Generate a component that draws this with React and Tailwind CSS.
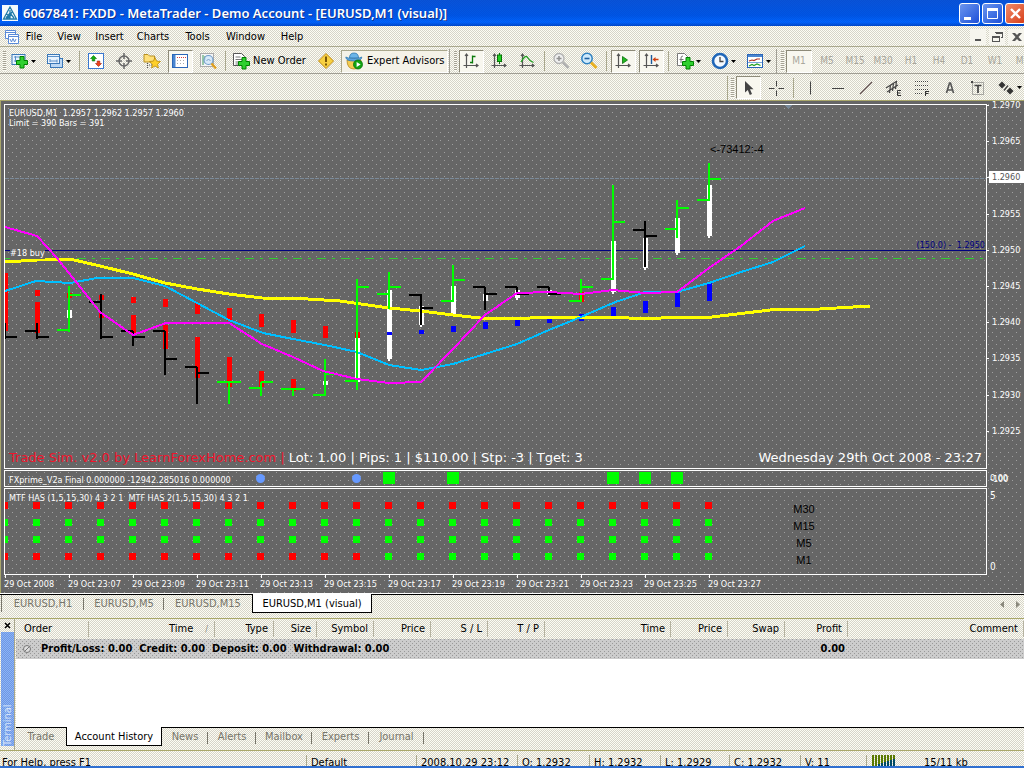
import React from "react";

const UI = "font-['DejaVu_Sans_Condensed','DejaVu_Sans',sans-serif]";
const FACE =
  "bg-[#ece9d8] bg-[repeating-conic-gradient(#fdfdf4_0_25%,#d6d4c9_0_50%)] bg-[length:2px_2px]";

/* ---------- icons ---------- */

function Icon({ children, size = 18 }) {
  return (
    <svg width={size} height={size} viewBox="0 0 18 18" fill="none" className="shrink-0" aria-hidden="true">
      {children}
    </svg>
  );
}

const Plus = ({ x = 6, y = 6 }) => (
  <path
    d={`M${x + 4} ${y + 0.5}h4v4h3.5v4h-3.5v3.5h-4v-3.5h-3.5v-4h3.5z`}
    fill="#2fd02f"
    stroke="#008000"
  />
);

const Axes = () => (
  <path d="M4.5 2v14M1.5 13.5h14M3 4l1.5-2L6 4M14 12l2 1.500l-2 1.500" stroke="#555" strokeWidth="1.2" />
);

const NewChartIcon = () => (
  <Icon>
    <rect x="1" y="2.500" width="13" height="10" fill="#e8f3ff" stroke="#3a78b8" />
    <path d="M3 5h9M4.500 4v6M3 9h5" stroke="#5a90c8" />
    <Plus x={5} y={4} />
  </Icon>
);
const ProfilesIcon = () => (
  <Icon>
    <rect x="4.500" y="6.500" width="12" height="9" fill="#bcd8f4" stroke="#3a78b8" />
    <rect x="1.500" y="2.500" width="12" height="9" fill="#e8f3ff" stroke="#3a78b8" />
    <path d="M2 4.500h11M4 7v3M4 9h7M11 7.500v3" stroke="#5a90c8" />
  </Icon>
);
const MarketWatchIcon = () => (
  <Icon>
    <rect x="1.500" y="1.500" width="15" height="15" fill="#fff" stroke="#3a78d0" />
    <path d="M6.500 3.500l3 3h-1.700v2.500h-2.600v-2.500h-1.700z" fill="#10b010" stroke="#087008" strokeWidth=".6" />
    <path d="M11.500 14.500l3-3h-1.700v-2.500h-2.600v2.500h-1.700z" fill="#f04018" stroke="#a02008" strokeWidth=".6" />
  </Icon>
);
const DataWindowIcon = () => (
  <Icon>
    <circle cx="9" cy="9" r="5" stroke="#666" strokeWidth="1.500" />
    <path d="M9 1v6M9 11v6M1 9h6M11 9h6" stroke="#666" strokeWidth="1.500" />
  </Icon>
);
const NavigatorIcon = () => (
  <Icon>
    <path d="M1 2.500h4l1.500 1.500h5v6h-10.500z" fill="#ffe078" stroke="#b89020" />
    <path d="M4.500 11v5M6 13h4" stroke="#555" strokeDasharray="1 1" />
    <path d="M12 5.500l1.600 3.600 3.900.4-2.900 2.700.8 3.800-3.400-2-3.400 2 .8-3.800-2.900-2.700 3.900-.4z" fill="#ffd02a" stroke="#b88a10" strokeWidth=".8" />
  </Icon>
);
const TerminalIcon = () => (
  <Icon>
    <rect x="1.500" y="2.500" width="15" height="13" fill="#fff" stroke="#2a66b8" />
    <rect x="2" y="3" width="2.500" height="12" fill="#4a86d0" />
    <path d="M6 5.500h9" stroke="#d04040" strokeDasharray="1 1" />
    <path d="M6 8.500h9M6 11.500h9" stroke="#aaa" strokeDasharray="1 2" />
  </Icon>
);
const TesterIcon = () => (
  <Icon>
    <rect x="1.500" y="1.500" width="13" height="13" fill="#f5f5f5" stroke="#aaa" />
    <path d="M4 3v10M6 4v4" stroke="#3a9a5a" />
    <circle cx="9.500" cy="8" r="4.500" fill="#cfe6fa" fillOpacity=".8" stroke="#6f9cc8" strokeWidth="1.200" />
    <path d="M7.500 9l2-2 2 2" stroke="#7aa2c8" />
    <path d="M12.500 11.500l4.500 5" stroke="#e0a020" strokeWidth="2.400" />
  </Icon>
);
const OrderIcon = () => (
  <Icon>
    <path d="M1.500 1.500h8l3 3v9h-11z" fill="#fff" stroke="#555" />
    <path d="M3.500 5h5M3.500 7.500h7M3.500 10h4M3.500 12h3" stroke="#777" />
    <Plus x={6} y={5} />
  </Icon>
);
const WarnIcon = () => (
  <Icon>
    <path d="M9 1.500l7.500 7.500-7.500 7.500-7.500-7.500z" fill="#f8d040" stroke="#c08a10" strokeLinejoin="round" />
    <path d="M9 4.500v5.500M9 11.500v2" stroke="#6a4a00" strokeWidth="1.800" />
  </Icon>
);
const ExpertIcon = () => (
  <Icon>
    <path d="M2 8q0 9 7 9t7-9z" fill="#f4cc50" stroke="#b88a20" strokeWidth=".8" />
    <path d="M4.500 6q0-5 4.500-5t4.500 5z" fill="#6ab4e8" stroke="#2e78b0" strokeWidth=".8" />
    <path d="M.8 5q2 1.500 8 1.500t8-1.500q0 4-8 4t-8-4z" fill="#5aa4e0" stroke="#2e78b0" strokeWidth=".8" />
    <circle cx="13" cy="12.500" r="4.500" fill="#12a612" stroke="#077007" strokeWidth=".8" />
    <path d="M11.600 10l4 2.500-4 2.500z" fill="#fff" />
  </Icon>
);
const BarChartIcon = () => (
  <Icon>
    <Axes />
    <path d="M10.500 3.500v8M8 10.500h2.500M10.500 4.500h3" stroke="#0a7a0a" strokeWidth="1.300" />
  </Icon>
);
const CandleIcon = () => (
  <Icon>
    <Axes />
    <path d="M9.500 1v11" stroke="#0a7a0a" />
    <rect x="7.500" y="3" width="4" height="6.500" fill="#20d020" stroke="#087008" />
  </Icon>
);
const LineChartIcon = () => (
  <Icon>
    <Axes />
    <path d="M3 10q4.500-8 6.500-4.500t6 5" stroke="#20a020" strokeWidth="1.300" />
  </Icon>
);
const ZoomInIcon = () => (
  <Icon>
    <circle cx="7" cy="6.500" r="5" fill="#efefef" stroke="#b0b0b0" strokeWidth="1.300" />
    <path d="M4.500 6.500h5M7 4v5" stroke="#909090" strokeWidth="1.500" />
    <path d="M11 10.500l5.500 5.500" stroke="#b0b0b0" strokeWidth="2.600" />
  </Icon>
);
const ZoomOutIcon = () => (
  <Icon>
    <circle cx="7" cy="6.500" r="5.200" fill="#cfeafc" stroke="#2e80c0" strokeWidth="1.500" />
    <path d="M4.500 6.500h5" stroke="#1e60a0" strokeWidth="1.600" />
    <path d="M11 10.500l5.500 5.500" stroke="#e8b020" strokeWidth="2.800" />
  </Icon>
);
const AutoScrollIcon = () => (
  <Icon>
    <Axes />
    <path d="M8.500 4.500l5 3.500-5 3.500z" fill="#20b820" stroke="#087008" strokeWidth=".8" />
  </Icon>
);
const ShiftIcon = () => (
  <Icon>
    <Axes />
    <path d="M9.500 3v9" stroke="#1a5a9a" strokeWidth="1.400" />
    <path d="M10.500 7.500l3-2.500v1.800h3v1.400h-3V10z" fill="#d04010" />
  </Icon>
);
const IndicatorIcon = () => (
  <Icon>
    <path d="M1.500 1.500h7l3 3v9h-10z" fill="#fff" stroke="#777" />
    <path d="M7 4q-2 0-2 2v5M3.500 7.500h4" stroke="#777" />
    <Plus x={6} y={5} />
  </Icon>
);
const ClockIcon = () => (
  <Icon>
    <circle cx="9" cy="9" r="7" fill="#f4f9ff" stroke="#1f66b8" strokeWidth="2.600" />
    <path d="M9 5v4.500h3.500" stroke="#444" strokeWidth="1.300" />
  </Icon>
);
const TemplateIcon = () => (
  <Icon>
    <rect x="1.500" y="2.500" width="15" height="13" fill="#fff" stroke="#2a66b8" />
    <rect x="2" y="3" width="14" height="2" fill="#4a86d0" />
    <path d="M3 9l3-1 2 .5 3-1.500 3 0" stroke="#b03020" strokeWidth="1.200" />
    <path d="M2 10.500h14" stroke="#7aa8d8" />
    <path d="M3 14l3-1.500 2 1 3-1.500 3.500 1.500" stroke="#20a020" strokeWidth="1.200" />
  </Icon>
);
const PointerIcon = () => (
  <Icon>
    <path d="M6 2v11.500l2.800-2.600 2 5 2.200-1-2-4.700h3.500z" fill="#444" />
  </Icon>
);
const CrossIcon = () => (
  <Icon>
    <path d="M9.500 2v5.500M9.500 11.500v5.500M2 9.500h5.500M11.500 9.500h5.500" stroke="#444" />
  </Icon>
);
const VLineIcon = () => <Icon><path d="M9.500 2.500v13" stroke="#444" /></Icon>;
const HLineIcon = () => <Icon><path d="M3 9.500h12" stroke="#444" /></Icon>;
const TrendIcon = () => <Icon><path d="M3 15L15 3" stroke="#655" strokeWidth="1.200" /></Icon>;
const ChannelIcon = () => (
  <Icon>
    <path d="M1 9L12 2M2 13L13 6M4.500 14l1-8M7.500 12l1-8M10.500 10l1-8" stroke="#444" strokeWidth="1.200" />
    <path d="M12.500 11.500v5M12.500 11.500h3.500M12.500 14h3M12.500 16.500h3.500" stroke="#333" />
  </Icon>
);
const FiboIcon = () => (
  <Icon>
    <path d="M2 2.500h13M2 6.500h13M2 10.500h13M2 14.500h7" stroke="#444" strokeDasharray="1 1" />
    <path d="M12.500 12v5M12.500 12.500h3.500M12.500 14.500h3" stroke="#333" />
  </Icon>
);
const TextIcon = () => (
  <Icon><path d="M5.500 14L8.500 4h1l3 10M6.500 11h5" stroke="#555" strokeWidth="1.600" /></Icon>
);
const LabelIcon = () => (
  <Icon>
    <rect x="3.500" y="3.500" width="11" height="12" stroke="#666" strokeDasharray="1 1" />
    <path d="M5.500 6.500h7M9 6.500v7.500" stroke="#444" strokeWidth="1.700" />
    <path d="M2 2h2v2H2z" fill="#444" />
  </Icon>
);
const ArrowsIcon = () => (
  <Icon>
    <path d="M5 2.500l3.500 3.500-3.500 3.500-3.500-3.500z" fill="#333" />
    <path d="M7 11.500l4-5" stroke="#444" strokeWidth="1.300" />
    <path d="M13 8.500l3.500 3.500-3.500 3.500-3.500-3.500z" fill="#333" />
  </Icon>
);
const Caret = () => (
  <svg width="5" height="3" viewBox="0 0 5 3" className="shrink-0" aria-hidden="true">
    <path d="M0 0h5L2.500 3z" fill="#000" />
  </svg>
);

/* ---------- bars ---------- */

function Tool({ label, pressed, drop, children }) {
  return (
    <button
      type="button"
      aria-label={label}
      aria-pressed={pressed ? true : undefined}
      className={
        (drop ? "w-[35px] gap-[2px] " : "w-7 ") +
        "flex h-6 shrink-0 items-center justify-center"
      }
    >
      {pressed ? (
        <span className="flex h-[23px] w-[25px] items-center justify-center border border-[#8d8a78] border-r-white border-b-white bg-[#f8f7ef]">
          {children}
        </span>
      ) : (
        children
      )}
      {drop && <Caret />}
    </button>
  );
}

const Sep = () => <span className="mr-[2px] ml-[3px] h-5 w-px shrink-0 bg-[#a9a78d]" />;
const Grip = () => (
  <span className="h-5 w-[3px] shrink-0 bg-[repeating-linear-gradient(#a5a294_0_1px,#fbfaf2_1px_2px)]" />
);

function TitleBar() {
  return (
    <header className="flex h-[26px] shrink-0 items-center bg-[repeating-conic-gradient(#0030c030_0_25%,transparent_0_50%),linear-gradient(#0a55d8,#0058e6_60%,#0066ff_85%,#0048c8)] bg-[length:2px_2px,100%_100%] pl-[2px]">
      <svg width="16" height="16" viewBox="0 0 16 16" aria-hidden="true">
        <rect width="16" height="16" fill="#f4fafc" />
        <path d="M8 2L1.500 14h13zM8 5v9M5 9l3 5M4 13l4-5 4 5M10 7l-5 7" stroke="#1f7aa8" fill="none" strokeWidth="1.300" />
      </svg>
      <h1 className="ml-[5px] flex-1 truncate font-['Noto_Sans','Open_Sans',sans-serif] text-[13px] leading-4 font-semibold text-white [text-shadow:1px_1px_0_#10308a]">
        6067841: FXDD - MetaTrader - Demo Account - [EURUSD,M1 (visual)]
      </h1>
      <div className="-mr-[2px] flex shrink-0 gap-[2px]">
        <button type="button" aria-label="Minimize" className="h-[21px] w-[21px] rounded-[3px] border border-white bg-linear-to-br from-[#6c95ee] to-[#1d4ed8]">
          <svg width="19" height="19" viewBox="0 0 19 19"><path d="M4 13h7v3H4z" fill="#fff" /></svg>
        </button>
        <button type="button" aria-label="Restore" className="h-[21px] w-[21px] rounded-[3px] border border-white bg-linear-to-br from-[#6c95ee] to-[#1d4ed8]">
          <svg width="19" height="19" viewBox="0 0 19 19"><path d="M4.500 5.500h10v9h-10z" stroke="#fff" fill="none" /><path d="M4 4h11v3H4z" fill="#fff" /></svg>
        </button>
        <button type="button" aria-label="Close" className="h-[21px] w-[21px] rounded-[3px] border border-white bg-linear-to-br from-[#f08a68] to-[#d63a10]">
          <svg width="19" height="19" viewBox="0 0 19 19"><path d="M5 5l9 9M14 5l-9 9" stroke="#fff" strokeWidth="2.400" /></svg>
        </button>
      </div>
    </header>
  );
}

function MenuBar() {
  const items = [
    ["File", "w-[28px]"],
    ["View", "w-[42px]"],
    ["Insert", "w-[39px]"],
    ["Charts", "w-[48px]"],
    ["Tools", "w-[41px]"],
    ["Window", "w-[55px]"],
    ["Help", "w-[38px]"],
  ];
  return (
    <nav className={FACE + " flex h-[21px] shrink-0 items-center border-b border-[#a9a78d] pt-px pl-1"}>
      <svg width="16" height="16" viewBox="0 0 16 16" aria-hidden="true">
        <path d="M1.500 1.500h10v8h-10z" fill="#fff" stroke="#5a8ad8" />
        <path d="M1 3.500h11" stroke="#5a8ad8" />
        <path d="M4.500 5.500h10v9h-10z" fill="#fff" stroke="#5a8ad8" />
        <path d="M4 7.500h11M6 10l1.500 3L9 9.500l1.500 3.500L12 10" stroke="#5a8ad8" fill="none" />
      </svg>
      <div className="flex flex-1 items-center">
        {items.map(([t, w]) => (
          <button key={t} type="button" className={"text-center text-[11px] leading-4 whitespace-nowrap " + w}>
            {t}
          </button>
        ))}
      </div>
      <div className="flex gap-[3px]">
        {[
          ["Minimize chart", "M4 9h6v2H4z"],
          ["Restore chart", "M5 2h8v6h-2V7h1V4H6V3H5zM2 6h8v6H2zM3 8v3h6V8z"],
          ["Close chart", "M3 3h3l2 2 2-2h3l-3.500 4 3.500 4h-3l-2-2-2 2h-3l3.500-4z"],
        ].map(([l, d]) => (
          <button key={l} type="button" aria-label={l} className="flex h-4 w-4 items-center justify-center bg-[#f6f5ee]">
            <svg width="14" height="14" viewBox="0 0 14 14"><path d={d} fill="#555" fillRule="evenodd" /></svg>
          </button>
        ))}
      </div>
    </nav>
  );
}

function MainToolbar() {
  return (
    <div className={FACE + " flex h-[27px] shrink-0 items-center overflow-hidden border-b border-[#a09e94] pt-[2px] pl-[3px] text-[11px] leading-4"}>
      <Grip />
      <Tool label="New chart" drop><NewChartIcon /></Tool>
      <Tool label="Profiles" drop><ProfilesIcon /></Tool>
      <Sep />
      <Tool label="Market watch"><MarketWatchIcon /></Tool>
      <Tool label="Data window"><DataWindowIcon /></Tool>
      <Tool label="Navigator"><NavigatorIcon /></Tool>
      <Tool label="Terminal" pressed><TerminalIcon /></Tool>
      <Tool label="Strategy tester"><TesterIcon /></Tool>
      <Sep />
      <button type="button" className="ml-1 flex h-6 w-[80px] shrink-0 items-center gap-[3px] whitespace-nowrap">
        <OrderIcon />New Order
      </button>
      <Tool label="Options"><WarnIcon /></Tool>
      <button type="button" aria-pressed="true" className="mx-px flex h-[23px] w-[107px] shrink-0 items-center gap-1 border border-[#a9a78d] border-r-white border-b-white bg-[#f4f2e8] pl-[3px] whitespace-nowrap">
        <ExpertIcon />Expert Advisors
      </button>
      <span className="mr-1 h-6 w-px shrink-0 bg-[#a09e94]" />
      <Grip />
      <Tool label="Bar chart" pressed><BarChartIcon /></Tool>
      <Tool label="Candlesticks"><CandleIcon /></Tool>
      <Tool label="Line chart"><LineChartIcon /></Tool>
      <Sep />
      <Tool label="Zoom in"><ZoomInIcon /></Tool>
      <Tool label="Zoom out"><ZoomOutIcon /></Tool>
      <Sep />
      <Tool label="Auto scroll" pressed><AutoScrollIcon /></Tool>
      <Tool label="Chart shift" pressed><ShiftIcon /></Tool>
      <Sep />
      <Tool label="Indicators" drop><IndicatorIcon /></Tool>
      <Tool label="Periods" drop><ClockIcon /></Tool>
      <Tool label="Templates" drop><TemplateIcon /></Tool>
      <span className="mr-1 h-6 w-px shrink-0 bg-[#a09e94]" />
      <Grip />
      {["M1", "M5", "M15", "M30", "H1", "H4", "D1", "W1", "MN"].map((p, i) => (
        <button
          key={p}
          type="button"
          className={
            "ml-[2px] h-[23px] w-[26px] shrink-0 text-center text-[10px] leading-4 text-[#a9a79c] " +
            (i === 0 ? "border border-[#8d8a78] border-r-white border-b-white bg-[#f8f7ef]" : "")
          }
        >
          {p}
        </button>
      ))}
    </div>
  );
}

function DrawToolbar() {
  return (
    <div className={FACE + " flex h-[26px] shrink-0 items-center justify-end overflow-hidden pt-px"}>
      <span className="mr-[3px] h-6 w-px shrink-0 bg-[#a9a78d]" />
      <Grip />
      <Tool label="Cursor" pressed><PointerIcon /></Tool>
      <Tool label="Crosshair"><CrossIcon /></Tool>
      <Sep />
      <Tool label="Vertical line"><VLineIcon /></Tool>
      <Tool label="Horizontal line"><HLineIcon /></Tool>
      <Tool label="Trendline"><TrendIcon /></Tool>
      <Tool label="Channel"><ChannelIcon /></Tool>
      <Tool label="Fibonacci"><FiboIcon /></Tool>
      <Tool label="Text"><TextIcon /></Tool>
      <Tool label="Text label"><LabelIcon /></Tool>
      <div className="-mr-[3px]">
        <Tool label="Arrows" drop><ArrowsIcon /></Tool>
      </div>
    </div>
  );
}

/* ---------- chart ---------- */

const G = "#00ff00";
const K = "#000000";
// x, colour, top, bottom, open tick, close tick, bodies: [colour, top, bottom]
const BARS = [
  [5, K, 323, 338, null, 337, [["red", 273, 331]]],
  [37, K, 323, 338, 331, 337, [["red", 290, 296], ["red", 302, 333]]],
  [69, G, 286, 331, 330, 295, [["red", 293, 298], ["#fff", 310, 318]]],
  [101, K, 294, 338, 302, 337, [["red", 295, 300], ["red", 313, 318]]],
  [133, K, 331, 345, 331, 337, [["red", 297, 303], ["red", 315, 335]]],
  [165, K, 331, 374, 331, 359, [["red", 299, 307], ["red", 325, 349]]],
  [197, K, 367, 403, 367, 373, [["red", 303, 314], ["red", 337, 378]]],
  [229, G, 382, 403, 382, 382, [["red", 308, 321], ["red", 357, 387]]],
  [261, G, 382, 395, 388, 382, [["red", 314, 327], ["red", 371, 387]]],
  [293, G, 388, 395, 389, 389, [["red", 320, 333], ["red", 379, 391]]],
  [325, G, 359, 395, 395, 374, [["red", 326, 338], ["#fff", 381, 385]]],
  [357, G, 279, 389, 381, 287, [["red", 332, 338], ["#fff", 338, 382]]],
  [389, G, 272, 308, 294, 287, [["#fff", 290, 359], ["blue", 332, 335]]],
  [421, K, 294, 324, 295, 308, [["#fff", 306, 325], ["blue", 330, 334]]],
  [453, G, 265, 301, 301, 280, [["#fff", 286, 314], ["blue", 326, 332]]],
  [485, K, 287, 309, 287, 294, [["#fff", 294, 301], ["blue", 322, 329]]],
  [517, K, 287, 294, 287, 294, [["#fff", 290, 298], ["blue", 319, 326]]],
  [549, K, 287, 294, 287, 294, [["#fff", 290, 294], ["blue", 317, 323]]],
  [581, G, 279, 301, 301, 287, [["red", 292, 302], ["blue", 314, 321]]],
  [613, G, 185, 279, 279, 222, [["#fff", 241, 292], ["blue", 307, 318]]],
  [645, K, 221, 266, 230, 236, [["#fff", 238, 268], ["blue", 301, 313]]],
  [677, G, 200, 237, 229, 208, [["#fff", 218, 253], ["blue", 293, 307]]],
  [709, G, 163, 200, 200, 179, [["#fff", 185, 236], ["blue", 283, 301]]],
];

const YELLOW =
  "5,262 37,260 70,259 100,266 133,274 165,283 197,289 229,294 262,298 308,299 340,301 389,308 421,311 453,315 480,318 530,318 550,317 613,317 645,319 677,317 712,317 770,310 820,309 870,306";
const CYAN =
  "5,291 36,281 70,283 97,278 133,278 165,286 197,303 229,320 263,333 293,339 325,345 357,352 389,365 421,370 453,364 485,354 517,344 549,330 581,317 613,303 645,292 677,292 709,283 741,272 773,262 805,246";
const MAGENTA =
  "5,227 37,236 57,258 100,312 133,335 166,323 229,323 262,344 293,357 323,371 357,379 389,383 421,382 453,349 485,315 517,293 549,292 581,294 613,290 645,293 677,292 709,268 741,246 773,221 805,208";

function PricePanel() {
  return (
    <div className="relative h-[365px] overflow-hidden border border-white">
      <svg className="block h-full w-full" role="img" aria-label="EURUSD M1 price chart">
        <g transform="translate(-5 -105)" shapeRendering="crispEdges">
          <path d="M785 105h7l-3.500 4z" fill="#778899" />
          <path d="M5 178.500h3000" stroke="#7b8a99" strokeDasharray="4 1" />
          <path d="M5 250.500h3000" stroke="#000080" />
          <path d="M5 258.500h3000" stroke="#32cd32" strokeDasharray="9 6 3 6" />
          {BARS.map(([x, , , , , , bodies]) =>
            bodies.map(([c, a, b]) => (
              <g key={x + c + a} fill={c}>
                <rect x={x - 2} y={a} width="5" height={b - a} />
                {c === "#fff" && <rect x={x - 1} y={a} width="2" height={b - a + 2} />}
              </g>
            ))
          )}
          <g fill="none">
            <polyline points={YELLOW} stroke="#ffff00" strokeWidth="3" />
            <polyline points={CYAN} stroke="#00bfff" strokeWidth="2" />
          </g>
          {BARS.map(([x, c, a, b, o, cl]) => (
            <g key={x} fill={c}>
              <rect x={x - 1} y={a} width="2" height={b - a + 1} />
              {o && <rect x={x - 12} y={o - 1} width="12" height="2" />}
              <rect x={x} y={cl - 1} width="12" height="2" />
            </g>
          ))}
          <polyline points={MAGENTA} stroke="#ff00ff" strokeWidth="2" fill="none" />
        </g>
      </svg>
      <p className="absolute top-[3px] left-1 text-[9px] leading-[10px] whitespace-pre text-white">
        {"EURUSD,M1  1.2957 1.2962 1.2957 1.2960\nLimit = 390 Bars = 391"}
      </p>
      <span className="absolute top-[142px] left-[5px] bg-[#666] text-[9px] leading-3 text-white">#18 buy</span>
      <span className="absolute top-[38px] left-[705px] font-['Liberation_Sans',sans-serif] text-[11px] leading-3 text-black">&lt;-73412:-4</span>
      <span className="absolute top-[134px] right-[1px] text-[9px] leading-3 whitespace-pre text-[#000080]">{"(150.0) -  1.2950"}</span>
      <div className="absolute inset-x-1 bottom-[2px] flex justify-between font-['DejaVu_Sans',sans-serif] text-[13px] leading-4 whitespace-nowrap">
        <p className="text-white">
          <span className="text-[#f0142c]">Trade Sim. v2.0 by LearnForexHome.com |</span>{" "}
          Lot: 1.00 | Pips: 1 | $110.00 | Stp: -3 | Tget: 3
        </p>
        <p className="text-white">Wednesday 29th Oct 2008 - 23:27</p>
      </div>
    </div>
  );
}

function PriceScale() {
  const prices = ["1.2970", "1.2965", "1.2960", "1.2955", "1.2950", "1.2945", "1.2940", "1.2935", "1.2930", "1.2925"];
  return (
    <ul className="-mt-[5px] flex h-[362px] flex-col text-[9px] leading-3 text-white">
      {prices.map((p) => (
        <li key={p} className="flex flex-1 items-start">
          <span className="mt-[6px] h-px w-[2px] shrink-0 bg-white" />
          <span className={"flex-1 pl-[3px] " + (p === "1.2960" ? "bg-white text-[#555]" : "")}>{p}</span>
        </li>
      ))}
    </ul>
  );
}

const SIGNALS = [389, 453, 613, 645, 677];

function PrimePanel() {
  return (
    <div className="relative h-[17px] overflow-hidden border border-white">
      <svg className="block h-full w-full" role="img" aria-label="FXprime signals">
        <g transform="translate(-5 -471)">
          <circle cx="260.500" cy="478.500" r="4.500" fill="#6699ff" />
          <circle cx="356.500" cy="478.500" r="4.500" fill="#6699ff" />
          {SIGNALS.map((x) => (
            <rect key={x} x={x - 6} y="472" width="12" height="12" fill={G} />
          ))}
        </g>
      </svg>
      <span className="absolute top-[3px] left-1 text-[9px] leading-3 whitespace-nowrap text-white">
        FXprime_V2a Final 0.000000 -12942.285016 0.000000
      </span>
    </div>
  );
}

function HasPanel() {
  const row = (y, color) =>
    BARS.map(([x]) => <rect key={y + "-" + x} x={x - 4} y={y} width="7" height="7" fill={color(x)} />);
  return (
    <div className="relative h-[87px] overflow-hidden border border-white">
      <svg className="block h-full w-full" role="img" aria-label="MTF HAS indicator">
        <g transform="translate(-5 -489)">
          {row(502, () => "#f00")}
          {row(519, () => G)}
          {row(536, () => G)}
          {row(553, (x) => (x < 380 ? "#f00" : G))}
        </g>
      </svg>
      <span className="absolute top-[3px] left-1 text-[9px] leading-3 whitespace-pre text-white">
        {"MTF HAS (1,5,15,30) 4 3 2 1  MTF HAS 2(1,5,15,30) 4 3 2 1"}
      </span>
      <ul className="absolute top-[12px] left-[779px] w-10 text-center font-['Liberation_Sans',sans-serif] text-[11px] leading-[17px] text-black">
        <li>M30</li>
        <li>M15</li>
        <li>M5</li>
        <li>M1</li>
      </ul>
    </div>
  );
}

function TimeAxis() {
  const times = ["23:07", "23:09", "23:11", "23:13", "23:15", "23:17", "23:19", "23:21", "23:23", "23:25", "23:27"];
  return (
    <ol className="flex h-[18px] text-[9px] leading-3 whitespace-nowrap text-white">
      {["2008", ...times].map((t) => (
        <li key={t} className="w-16 shrink-0">
          <span className="ml-px block h-[3px] w-px bg-white" />
          29 Oct {t}
        </li>
      ))}
    </ol>
  );
}

function Chart() {
  return (
    <main className="flex shrink-0 border-t border-l border-[#a9a76a] bg-[#666] bg-[conic-gradient(from_270deg_at_1px_1px,#a0a0a0_25%,transparent_0),conic-gradient(from_270deg_at_1px_1px,#a0a0a0_25%,transparent_0)] bg-[length:8px_8px] bg-[position:3px_3px,7px_7px] pt-[3px] pl-[3px]">
      <div className="flex min-w-0 flex-1 flex-col">
        <PricePanel />
        <div className="mt-px"><PrimePanel /></div>
        <div className="mt-px"><HasPanel /></div>
        <TimeAxis />
      </div>
      <div className="flex w-[37px] shrink-0 flex-col">
        <div className="h-[366px]"><PriceScale /></div>
        <div className="relative h-[18px] text-[9px] leading-3 text-white">
          <span className="absolute top-[2px] left-[3px]">0.00</span>
          <span className="absolute top-[3px] left-[3px]">-100</span>
        </div>
        <div className="flex h-[87px] flex-col justify-between py-[2px] pl-[3px] text-[10px] leading-3 text-white">
          <span>5</span>
          <span>0</span>
        </div>
      </div>
    </main>
  );
}

function ChartTabs() {
  return (
    <div className={FACE + " flex h-[25px] shrink-0 items-start border-t border-t-white text-[11px] leading-4"}>
      <div className="flex h-[19px] flex-1 border-t border-black pl-px">
        {[
          ["EURUSD,H1", "w-[83px]"],
          ["EURUSD,M5", "w-[80px]"],
          ["EURUSD,M15", "w-[88px]"],
        ].map(([t, w], i) => (
          <button key={t} type="button" className={"relative h-[17px] text-center text-[#77756a] " + w + (i === 0 ? " border-l border-[#77756a]" : "")}>
            {t}
            {i < 2 && <span className="absolute top-[3px] right-0 h-3 w-px bg-[#77756a]" />}
          </button>
        ))}
        <button type="button" className="-mt-px h-[19px] w-[120px] border border-t-0 border-black bg-white pt-px text-center text-black">
          EURUSD,M1 (visual)
        </button>
        <div className="ml-auto flex items-center gap-3 pr-1">
          <svg width="4" height="7" viewBox="0 0 4 7"><path d="M4 0v7L0 3.500z" fill="#8a887c" /></svg>
          <svg width="4" height="7" viewBox="0 0 4 7"><path d="M0 0v7l4-3.500z" fill="#8a887c" /></svg>
        </div>
      </div>
    </div>
  );
}

/* ---------- terminal ---------- */

function Terminal() {
  const cols = ["Order", "Time", "Type", "Size", "Symbol", "Price", "S / L", "T / P", "Time", "Price", "Swap", "Profit", "Comment"];
  const tabs = [
    ["News", "w-[46px]"],
    ["Alerts", "w-[48px]"],
    ["Mailbox", "w-[56px]"],
    ["Experts", "w-[57px]"],
    ["Journal", "w-[55px]"],
  ];
  return (
    <section className={FACE + " flex min-h-0 flex-1 border-t border-[#a9a76a] text-[11px] leading-4"}>
      <div className="flex w-[15px] shrink-0 flex-col items-center border-r border-[#a9a78d]">
        <button type="button" aria-label="Close terminal" className="flex h-[13px] w-[13px] shrink-0 items-center justify-center">
          <svg width="7" height="7" viewBox="0 0 7 7"><path d="M1 1l5 5M6 1l-5 5" stroke="#000" strokeWidth="1.500" /></svg>
        </button>
        <div className="mb-1 flex min-h-0 w-[13px] flex-1 items-start justify-center bg-[#7ba2e7] bg-[repeating-conic-gradient(#8ab6f4_0_25%,#6f94e4_0_50%)] bg-[length:2px_2px]">
          <h2 className="h-full rotate-180 text-[11px] leading-[13px] text-[#d6e4fa] [writing-mode:vertical-rl]">Terminal</h2>
        </div>
      </div>
      <div className="flex min-w-0 flex-1 flex-col pl-px">
        <div className="min-h-0 flex-1 border-b border-black bg-white">
          <table className="w-full table-fixed border-collapse">
            <colgroup>
              <col className="w-[73px]" />
              <col className="w-[126px]" />
              <col className="w-[59px]" />
              <col className="w-[43px]" />
              <col className="w-[57px]" />
              <col className="w-[57px]" />
              <col className="w-[57px]" />
              <col className="w-[57px]" />
              <col className="w-[126px]" />
              <col className="w-[57px]" />
              <col className="w-[57px]" />
              <col className="w-[63px]" />
              <col />
            </colgroup>
            <thead className={FACE}>
              <tr className="h-[20px]">
                {cols.map((c, i) => (
                  <th
                    key={i}
                    scope="col"
                    className={
                      "p-0 font-normal whitespace-nowrap " + (i === 0 ? "pl-2 text-left" : "text-right")
                    }
                  >
                    <span className={"block border-r border-[#b5b2a0] " + (i === 1 ? "pr-[6px]" : "pr-[5px]")}>
                      {c}
                      {i === 1 && <span className="pl-3 text-[9px] text-[#8a887c]">/</span>}
                    </span>
                  </th>
                ))}
              </tr>
            </thead>
            <tbody>
              <tr className="h-[20px] bg-[#cccccc] bg-[conic-gradient(from_270deg_at_1px_1px,#999_25%,transparent_0),conic-gradient(from_270deg_at_1px_1px,#999_25%,transparent_0)] bg-[length:4px_4px] bg-[position:0_0,2px_2px] font-bold">
                <td colSpan={11} className="p-0 pl-[6px]">
                  <div className="flex items-center gap-[9px] whitespace-pre">
                    <svg width="10" height="10" viewBox="0 0 10 10" aria-hidden="true">
                      <circle cx="5" cy="5" r="3.500" fill="#ddd" stroke="#777" />
                      <path d="M2.500 7.500l5-5" stroke="#777" />
                    </svg>
                    {"Profit/Loss: 0.00  Credit: 0.00  Deposit: 0.00  Withdrawal: 0.00"}
                  </div>
                </td>
                <td className="p-0 pr-[3px] text-right">0.00</td>
                <td />
              </tr>
            </tbody>
          </table>
        </div>
        <div className="flex h-[22px] shrink-0 items-start text-[#77756a]">
          <button type="button" className="mt-px w-[50px] text-center">Trade</button>
          <button type="button" className="-mt-px h-[19px] w-[96px] border border-t-0 border-black bg-white pt-px text-center whitespace-nowrap text-black">
            Account History
          </button>
          {tabs.map(([t, w]) => (
            <button key={t} type="button" className={"relative mt-px text-center " + w}>
              {t}
              <span className="absolute top-[3px] right-0 h-3 w-px bg-[#77756a]" />
            </button>
          ))}
        </div>
      </div>
    </section>
  );
}

function StatusBar() {
  const cells = [
    ["Default", "w-[110px]"],
    ["2008.10.29 23:12", "w-[101px]"],
    ["O: 1.2932", "w-[72px]"],
    ["H: 1.2932", "w-[71px]"],
    ["L: 1.2929", "w-[69px]"],
    ["C: 1.2932", "w-[71px]"],
    ["V: 11", "w-[66px]"],
  ];
  return (
    <footer className={FACE + " h-[18px] shrink-0 overflow-hidden border-t border-b-2 border-t-[#a9a76a] border-b-[#2f6fd0] text-[11px] leading-4 whitespace-nowrap"}>
      <div className="flex pt-1">
        <span className="min-w-0 flex-1 pl-[2px]">For Help, press F1</span>
        {cells.map(([t, w]) => (
          <span key={t} className={"shrink-0 border-l border-[#a9a78d] pl-1 " + w}>{t}</span>
        ))}
        <span className="flex w-[158px] shrink-0 gap-7 border-l border-[#a9a78d] pl-[5px]">
          <svg width="24" height="14" viewBox="0 0 24 14" shapeRendering="crispEdges" aria-hidden="true">
            <path d="M1 0v14M4 0v14M7 0v14M10 0v14M13 0v14M16 0v14M19 0v14M22 0v14" stroke="#5a7a00" strokeWidth="2" />
            <path d="M7 9v5M10 8v6M13 7v7M16 6v8M19 5v9M22 4v10" stroke="#004a66" strokeWidth="2" />
          </svg>
          15/11 kb
        </span>
      </div>
    </footer>
  );
}

export default function App() {
  return (
    <div className={UI + " flex h-screen flex-col overflow-hidden text-black"}>
      <TitleBar />
      <MenuBar />
      <MainToolbar />
      <DrawToolbar />
      <Chart />
      <ChartTabs />
      <Terminal />
      <StatusBar />
    </div>
  );
}
